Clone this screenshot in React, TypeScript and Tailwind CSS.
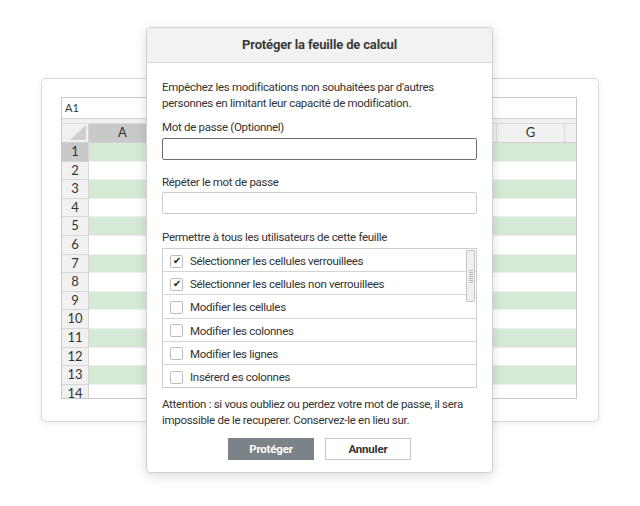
import React from "react";

const columns = ["A", "B", "C", "D", "E", "F", "G", "H"];
const rows = Array.from({ length: 14 }, (_, i) => i + 1);

const options = [
  { label: "Sélectionner les cellules verrouillees", checked: true },
  { label: "Sélectionner les cellules non verrouillees", checked: true },
  { label: "Modifier les cellules", checked: false },
  { label: "Modifier les colonnes", checked: false },
  { label: "Modifier les lignes", checked: false },
  { label: "Insérerd es colonnes", checked: false },
];

const Sheet: React.FC = () => (
  <div className="flex h-[302px] w-[516px] flex-col overflow-hidden border border-[#c9c9c9] bg-white font-['Lato','Liberation_Sans',sans-serif] text-[#333]">
    <div className="flex h-[21px] shrink-0 items-center border-b border-[#d4d4d4] px-[3px] text-[11px]">A1</div>
    <div className="h-[5px] shrink-0 border-b border-[#dcdcdc] bg-[#f1f1f1]" />
    <div className="flex h-[19px] shrink-0 border-b border-[#d0d0d0] bg-[#f1f1f1] text-[13px]">
      <div className="relative w-[27px] shrink-0 border-r border-[#d6d6d6]">
        <svg className="absolute bottom-[2px] right-[2px]" width="16" height="15" viewBox="0 0 16 15">
          <polygon points="16,0 16,15 0,15" fill="#cfcfcf" />
        </svg>
      </div>
      {columns.map((c) => (
        <div
          key={c}
          className={`flex w-[68px] shrink-0 items-center justify-center border-r border-[#dadada] ${
            c === "A" ? "bg-[#c9c9c9]" : ""
          }`}
        >
          {c}
        </div>
      ))}
    </div>
    {rows.map((r) => (
      <div key={r} className="flex h-[18.6px] shrink-0 text-[13px]">
        <div
          className={`flex w-[27px] shrink-0 items-center justify-center border-b border-r border-[#d6d6d6] ${
            r === 1 ? "bg-[#c9c9c9]" : "bg-[#f1f1f1]"
          }`}
        >
          {r}
        </div>
        <div className={`flex-1 border-b border-[#eeeeee] ${r % 2 === 1 ? "bg-[#d4ead4]" : "bg-white"}`} />
      </div>
    ))}
  </div>
);

const ProtectDialog: React.FC = () => (
  <div className="absolute left-[146px] top-[27px] flex h-[446px] w-[347px] flex-col overflow-hidden rounded-[4px] border border-[#d0d0d0] bg-white font-['Roboto','Liberation_Sans',sans-serif] text-[#333] shadow-[0_3px_12px_rgba(0,0,0,0.14)]">
    <div className="flex h-[35px] shrink-0 items-center justify-center border-b border-[#d6d6d6] bg-[#f2f2f2] text-[13px] font-bold tracking-[-0.15px] text-[#3a3a3a]">
      Protéger la feuille de calcul
    </div>
    <div className="flex flex-col whitespace-nowrap px-[15px] pt-[16px] text-[11.5px] leading-[16px] tracking-[-0.3px]">
      <p>
        Empêchez les modifications non souhaitées par d'autres
        <br />
        personnes en limitant leur capacité de modification.
      </p>
      <span className="mt-[8px]">Mot de passe (Optionnel)</span>
      <div className="mt-[3px] h-[22px] rounded-[2px] border border-[#6e6e6e]" />
      <span className="mt-[14px]">Répéter le mot de passe</span>
      <div className="mt-[2px] h-[22px] rounded-[2px] border border-[#cccccc]" />
      <span className="mt-[15px]">Permettre à tous les utilisateurs de cette feuille</span>
      <div className="relative mt-[3px] h-[140px] overflow-hidden border border-[#cccccc]">
        {options.map((o) => (
          <div key={o.label} className="flex h-[23.2px] items-center border-b border-[#d4d4d4] pl-[7px] pt-[2px]">
            <span className="flex h-[13px] w-[13px] shrink-0 items-center justify-center rounded-[2px] border border-[#bdbdbd] bg-white text-[10px] leading-none tracking-normal text-[#222]">
              {o.checked ? "✔" : ""}
            </span>
            <span className="ml-[7px]">{o.label}</span>
          </div>
        ))}
        <div className="absolute right-[1px] top-[1px] flex h-[52px] w-[9px] items-center justify-center rounded-[1px] border border-[#c6c6c6] bg-[#efefef]">
          <div className="flex flex-col gap-[1px]">
            {Array.from({ length: 7 }).map((_, i) => (
              <div key={i} className="h-px w-[4px] bg-[#b8b8b8]" />
            ))}
          </div>
        </div>
      </div>
      <p className="mt-[8px]">
        Attention : si vous oubliez ou perdez votre mot de passe, il sera
        <br />
        impossible de le recuperer. Conservez-le en lieu sur.
      </p>
      <div className="mt-[10px] flex justify-center gap-[11px] text-[11.5px] font-bold tracking-[-0.2px]">
        <button type="button" className="h-[22px] w-[86px] bg-[#7b8389] text-white">
          Protéger
        </button>
        <button type="button" className="h-[22px] w-[86px] border border-[#c8c8c8] bg-white text-[#333]">
          Annuler
        </button>
      </div>
    </div>
  </div>
);

export default function App() {
  return (
    <div className="relative h-[506px] w-[640px] overflow-hidden bg-white">
      <div className="ml-[41px] mt-[78px] h-[344px] w-[558px] rounded-[5px] border border-[#d9d9d9] bg-white pl-[19px] pt-[18px] shadow-[0_2px_6px_rgba(0,0,0,0.06)]">
        <Sheet />
      </div>
      <ProtectDialog />
    </div>
  );
}
